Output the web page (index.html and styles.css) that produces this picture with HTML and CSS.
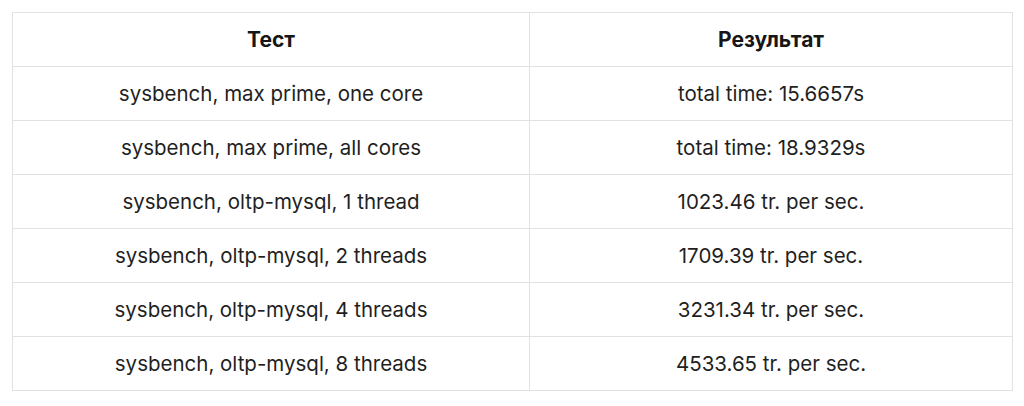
FILE: index.html
```html
<!DOCTYPE html>
<html lang="ru">
<head>
<meta charset="utf-8">
<link rel="stylesheet" href="styles.css">
</head>
<body>
<table class="results">
  <colgroup><col class="col-test"><col class="col-result"></colgroup>
  <thead>
    <tr><th>Тест</th><th>Результат</th></tr>
  </thead>
  <tbody>
    <tr><td>sysbench, max prime, one core</td><td>total time: 15.6657s</td></tr>
    <tr><td>sysbench, max prime, all cores</td><td>total time: 18.9329s</td></tr>
    <tr><td>sysbench, oltp-mysql, 1 thread</td><td>1023.46 tr. per sec.</td></tr>
    <tr><td>sysbench, oltp-mysql, 2 threads</td><td>1709.39 tr. per sec.</td></tr>
    <tr><td>sysbench, oltp-mysql, 4 threads</td><td>3231.34 tr. per sec.</td></tr>
    <tr><td>sysbench, oltp-mysql, 8 threads</td><td>4533.65 tr. per sec.</td></tr>
  </tbody>
</table>
</body>
</html>
```
FILE: styles.css
```css
html, body {
  margin: 0;
  padding: 0;
  background: #ffffff;
}
body {
  padding: 12px 11px 0 12px;
  font-family: Inter, "Liberation Sans", Arial, sans-serif;
  color: #1f1f1f;
}
.results {
  width: 1001px;
  border-collapse: collapse;
  table-layout: fixed;
  font-size: 20.5px;
}
.col-test { width: 517px; }
.results th,
.results td {
  border: 1px solid #dfe3e6;
  height: 53px;
  padding: 0 8px;
  text-align: center;
  vertical-align: middle;
}
.results th {
  font-weight: 700;
  font-size: 21px;
  color: #161616;
}
```
